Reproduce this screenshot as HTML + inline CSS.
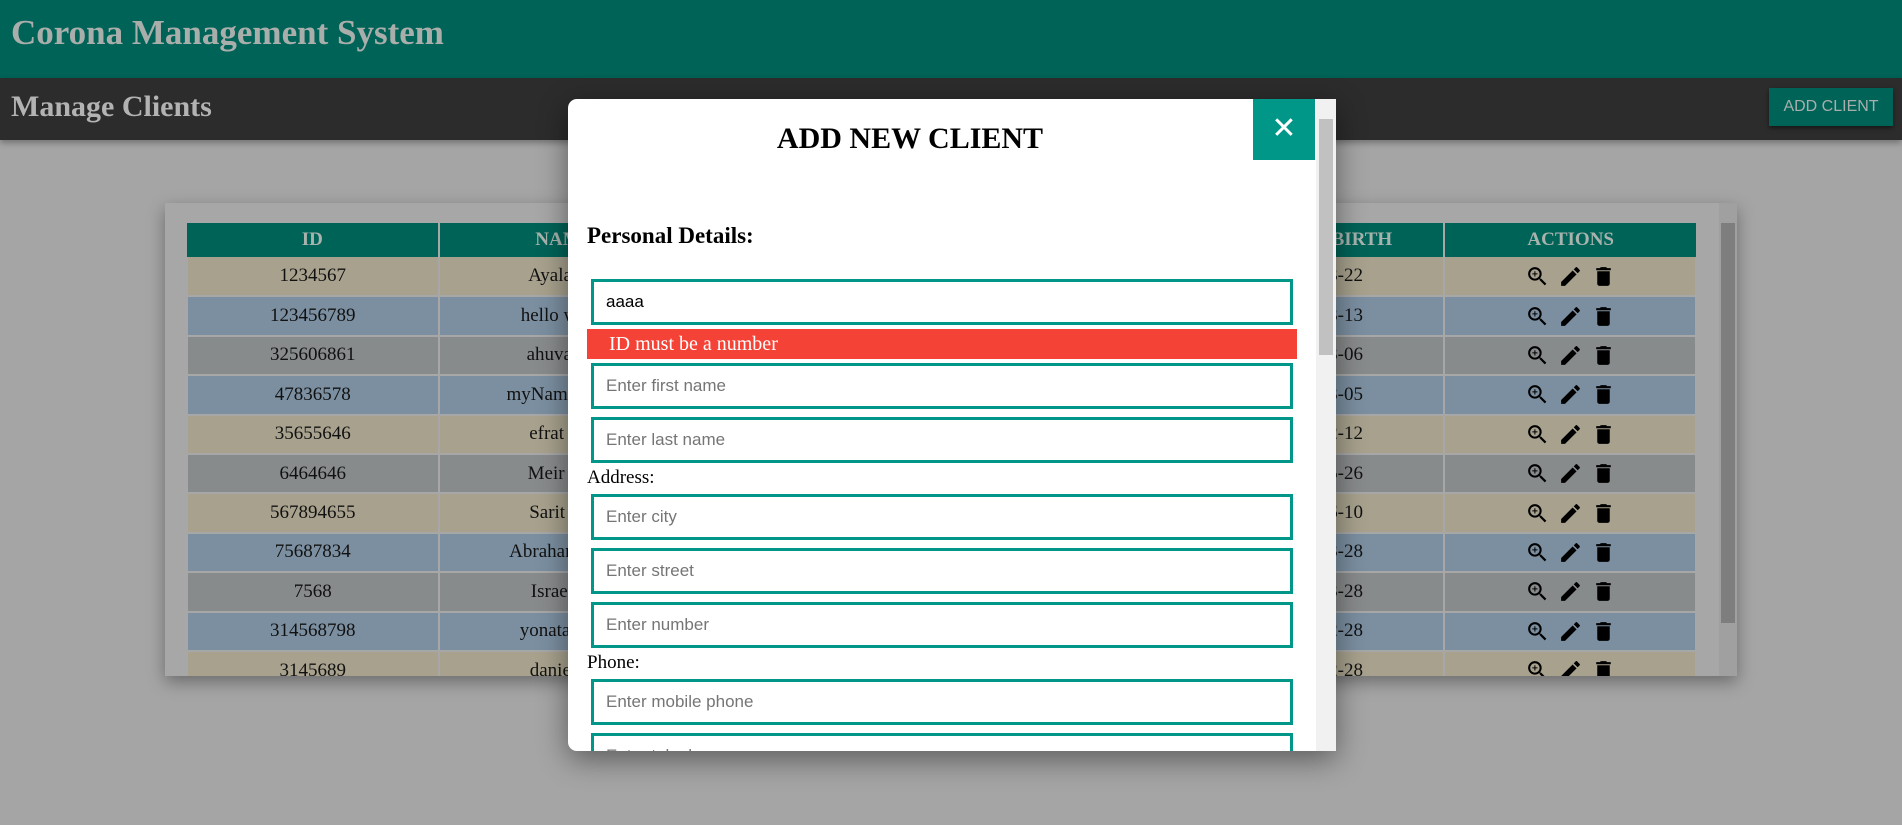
<!DOCTYPE html>
<html><head><meta charset="utf-8"><style>
*{box-sizing:border-box;margin:0;padding:0}
body{width:1902px;height:825px;overflow:hidden;background:#a5a5a5;font-family:"Liberation Serif",serif;position:relative}
.hdr{position:absolute;left:0;top:0;width:1902px;height:78px;background:#006358}
.hdr h1{position:absolute;left:11px;top:13px;font-size:35px;color:#a9aeab;font-weight:bold}
.sub{position:absolute;left:0;top:78px;width:1902px;height:62px;background:#2c2c2c;box-shadow:0 3px 6px rgba(0,0,0,.3)}
.sub h2{position:absolute;left:11px;top:12px;font-size:30px;color:#b3b3b3;font-weight:bold}
.btn{position:absolute;left:1769px;top:10px;width:124px;height:38px;background:#006358;color:#a8aeab;font:16px "Liberation Sans",sans-serif;text-align:center;line-height:38px;box-shadow:0 2px 4px rgba(0,0,0,.5)}
.card{position:absolute;left:165px;top:203px;width:1572px;height:473px;background:#a7a7a7;box-shadow:0 6px 16px rgba(0,0,0,.35);overflow:hidden}
.sb{position:absolute;right:0;top:0;width:18px;height:473px;background:#a0a0a0}
.sb i{position:absolute;left:2px;top:20px;width:14px;height:400px;background:#7e7e7e}
table{position:absolute;left:21px;top:20px;width:1511px;border-collapse:collapse}
th{background:#006358;color:#a9b3ae;height:34px;font-size:19px;font-weight:bold;border-left:2px solid #a7a7a7;width:252px}
td{height:39.4px;text-align:center;font-size:19px;color:#111;border:2px solid #a7a7a7;border-top:0;border-bottom:2px solid #a7a7a7;white-space:nowrap}
tr.a td{background:#a7a18d}tr.b td{background:#7b8fa1}tr.c td{background:#888b8c}
td svg{width:25px;height:25px;vertical-align:middle;margin:0 4px}
.modal{position:absolute;left:568px;top:99px;width:768px;height:652px;background:#fff;border-radius:9px 0 0 9px;box-shadow:0 8px 30px rgba(0,0,0,.45);overflow:hidden}
.msb{position:absolute;right:0;top:0;width:20px;height:652px;background:#f1f1f1}
.msb i{position:absolute;left:3px;top:20px;width:14px;height:236px;background:#c1c1c1}
.close{position:absolute;left:685px;top:0;width:62px;height:61px;background:#009688;color:#fff;font:30px "Liberation Sans",sans-serif;text-align:center;line-height:60px}
.title{position:absolute;left:0;width:684px;top:23px;text-align:center;font-size:30px;font-weight:bold}
.pd{position:absolute;left:19px;top:124px;font-size:23px;font-weight:bold}
.in{position:absolute;left:23px;width:702px;height:46px;border:3px solid #009688;font:17px "Liberation Sans",sans-serif;color:#757575;padding-left:12px;line-height:40px}
.err{position:absolute;left:19px;top:230px;width:710px;height:30px;background:#f44336;color:#fff;font-size:20px;padding-left:22px;line-height:30px}
.lbl{position:absolute;left:19px;font-size:19px;color:#000}
</style></head><body>
<div class="hdr"><h1>Corona Management System</h1></div>
<div class="sub"><h2>Manage Clients</h2><div class="btn">ADD CLIENT</div></div>
<div class="card">
<table>
<tr><th style="border-left:0">ID</th><th>NAME</th><th>CITY</th><th>PHONE</th><th>DATE OF BIRTH</th><th>ACTIONS</th></tr>
<tr class="a"><td>1234567</td><td>Ayala Tal</td><td></td><td></td><td>2000-03-22</td><td class="ic"></td></tr>
<tr class="b"><td>123456789</td><td>hello world</td><td></td><td></td><td>2000-03-13</td><td class="ic"></td></tr>
<tr class="c"><td>325606861</td><td>ahuva aaa</td><td></td><td></td><td>2000-03-06</td><td class="ic"></td></tr>
<tr class="b"><td>47836578</td><td>myName name</td><td></td><td></td><td>2000-03-05</td><td class="ic"></td></tr>
<tr class="a"><td>35655646</td><td>efrat tokr</td><td></td><td></td><td>2000-02-12</td><td class="ic"></td></tr>
<tr class="c"><td>6464646</td><td>Meir Hao</td><td></td><td></td><td>2000-05-26</td><td class="ic"></td></tr>
<tr class="a"><td>567894655</td><td>Sarit Lev</td><td></td><td></td><td>2000-06-10</td><td class="ic"></td></tr>
<tr class="b"><td>75687834</td><td>Abraham Levi</td><td></td><td></td><td>2000-03-28</td><td class="ic"></td></tr>
<tr class="c"><td>7568</td><td>Israel Isr</td><td></td><td></td><td>2000-03-28</td><td class="ic"></td></tr>
<tr class="b"><td>314568798</td><td>yonatan gol</td><td></td><td></td><td>2000-02-28</td><td class="ic"></td></tr>
<tr class="a"><td>3145689</td><td>daniel co</td><td></td><td></td><td>2000-02-28</td><td class="ic"></td></tr>
</table>
<div class="sb"><i></i></div>
</div>
<div class="modal">
<div class="title">ADD NEW CLIENT</div>
<div class="close">✕</div>
<div class="pd">Personal Details:</div>
<div class="in" style="top:180px;color:#000">aaaa</div>
<div class="err">ID must be a number</div>
<div class="in" style="top:264px">Enter first name</div>
<div class="in" style="top:318px">Enter last name</div>
<div class="lbl" style="top:368px">Address:</div>
<div class="in" style="top:395px">Enter city</div>
<div class="in" style="top:449px">Enter street</div>
<div class="in" style="top:503px">Enter number</div>
<div class="lbl" style="top:553px">Phone:</div>
<div class="in" style="top:580px">Enter mobile phone</div>
<div class="in" style="top:634px">Enter telephone</div>
<div class="msb"><i></i></div>
</div>
<script>
var s='<svg viewBox="0 0 24 24"><path d="M15.5 14h-.79l-.28-.27A6.471 6.471 0 0 0 16 9.5 6.5 6.5 0 1 0 9.5 16c1.61 0 3.09-.59 4.23-1.57l.27.28v.79l5 4.99L20.49 19l-4.99-5zm-6 0C7.01 14 5 11.99 5 9.5S7.01 5 9.5 5 14 7.01 14 9.5 11.99 14 9.5 14zm2.5-4h-2v2H9v-2H7V9h2V7h1v2h2v1z"/></svg><svg viewBox="0 0 24 24"><path d="M3 17.25V21h3.75L17.81 9.94l-3.75-3.75L3 17.25zM20.71 7.04a.996.996 0 0 0 0-1.41l-2.34-2.34a.996.996 0 0 0-1.41 0l-1.83 1.83 3.75 3.75 1.83-1.83z"/></svg><svg viewBox="0 0 24 24"><path d="M6 19c0 1.1.9 2 2 2h8c1.1 0 2-.9 2-2V7H6v12zM19 4h-3.5l-1-1h-5l-1 1H5v2h14V4z"/></svg>';
document.querySelectorAll('.ic').forEach(function(e){e.innerHTML=s});
</script>
</body></html>
